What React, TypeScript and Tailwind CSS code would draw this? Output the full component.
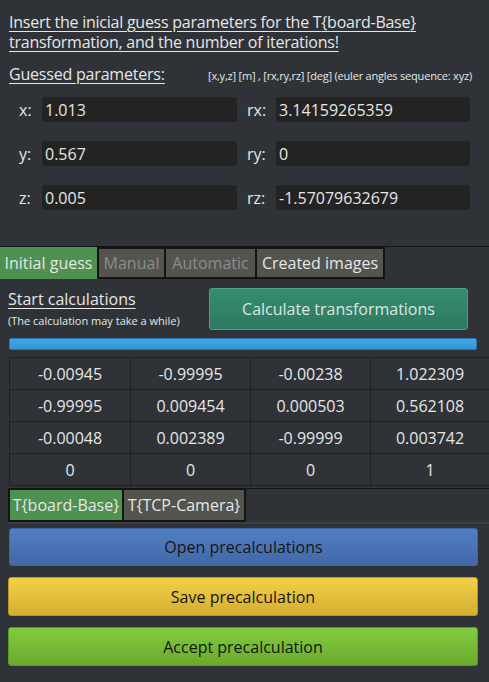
import React from 'react';

const font = { fontFamily: '"Open Sans", "Noto Sans", sans-serif' };

const params: [string, string, string, string][] = [
  ['x:', '1.013', 'rx:', '3.14159265359'],
  ['y:', '0.567', 'ry:', '0'],
  ['z:', '0.005', 'rz:', '-1.57079632679'],
];

const matrix = [
  ['-0.00945', '-0.99995', '-0.00238', '1.022309'],
  ['-0.99995', '0.009454', '0.000503', '0.562108'],
  ['-0.00048', '0.002389', '-0.99999', '0.003742'],
  ['0', '0', '0', '1'],
];

export default function App() {
  return (
    <div className="w-[489px] h-[682px] overflow-hidden bg-[#2f3337] text-[#e6e6e6] text-[16px] flex flex-col" style={font}>
      {/* guess parameters */}
      <div className="px-[9px] pt-[12px] h-[246px] flex flex-col">
        <p className="underline underline-offset-[3px] leading-[20px] tracking-[-0.25px]">
          Insert the inicial guess parameters for the T{'{'}board-Base{'}'}
          <br />
          transformation, and the number of iterations!
        </p>
        <div className="flex items-baseline mt-[10px] h-[22px]">
          <span className="underline underline-offset-[3px] w-[199px] tracking-[-0.2px]">Guessed parameters:</span>
          <span className="text-[11px] tracking-[-0.2px]">[x,y,z] [m] , [rx,ry,rz] [deg] (euler angles sequence: xyz)</span>
        </div>
        <div className="flex flex-col gap-[19px] mt-[13px]">
          {params.map(([l1, v1, l2, v2]) => (
            <div key={l1} className="flex items-center h-[25px] pl-[10px]">
              <span className="w-[23px]">{l1}</span>
              <div className="w-[195px] h-full bg-[#232323] rounded-[3px] flex items-center px-[3px]">{v1}</div>
              <span className="w-[29px] ml-[10px]">{l2}</span>
              <div className="w-[194px] h-full bg-[#232323] rounded-[3px] flex items-center px-[3px]">{v2}</div>
            </div>
          ))}
        </div>
      </div>

      {/* main tabs */}
      <div className="border-t border-[#141414] flex h-[33px]">
        <div className="w-[97px] bg-[#4e9150] flex items-center justify-center">Initial guess</div>
        <div className="w-[69px] bg-[#54544f] border-2 border-[#141414] flex items-center justify-center text-[#8c8c8c]">Manual</div>
        <div className="w-[91px] bg-[#54544f] border-2 border-l-0 border-[#141414] flex items-center justify-center text-[#8c8c8c]">Automatic</div>
        <div className="w-[128px] bg-[#54544f] border-2 border-l-0 border-[#141414] flex items-center justify-center">Created images</div>
      </div>

      <div className="flex flex-col pl-[8px]">
        <div className="flex mt-[9px] h-[42px]">
          <div className="w-[201px] flex flex-col pt-[1px]">
            <span className="underline underline-offset-[3px] leading-[20px]">Start calculations</span>
            <span className="text-[11px] mt-[5px] leading-[14px]">(The calculation may take a while)</span>
          </div>
          <button className="w-[259px] h-[42px] rounded-[3px] border border-[#47a283] bg-gradient-to-b from-[#368c6f] to-[#2d7a60] text-[#dfe6e2]">
            Calculate transformations
          </button>
        </div>
        <div className="mt-[8px] ml-[1px] w-[468px] h-[12px] rounded-[2px] border border-[#2a76ae] bg-gradient-to-b from-[#42a7e6] to-[#3595d6]" />

        {/* matrix */}
        <div className="mt-[7px] ml-[1px] border-l border-t border-[#1f2225] grid grid-cols-[121px_120px_120px_119px]">
          {matrix.flat().map((v, i) => (
            <div key={i} className="h-[32px] border-r border-b border-[#1f2225] flex items-center justify-center">{v}</div>
          ))}
        </div>

        {/* sub tabs */}
        <div className="flex h-[34px] mt-[2px]">
          <div className="w-[116px] bg-[#4e9150] border-2 border-[#141414] flex items-center justify-center">T{'{'}board-Base{'}'}</div>
          <div className="w-[122px] bg-[#54544f] border-2 border-l-0 border-[#141414] flex items-center justify-center">T{'{'}TCP-Camera{'}'}</div>
          <div className="flex-1 border-t border-[#141414]" />
        </div>
        <div className="border-t-2 border-[#3b3f42]" />

        {/* actions */}
        <div className="flex flex-col gap-[11px] mt-[4px] pr-[11px] text-[#151515]">
          <button className="ml-[1px] h-[38px] rounded-[3px] border border-[#3b64a3] bg-gradient-to-b from-[#527fc3] to-[#4268a8]">Open precalculations</button>
          <button className="h-[39px] rounded-[3px] border border-[#b8962a] bg-gradient-to-b from-[#f4d047] to-[#d5ad31]">Save precalculation</button>
          <button className="h-[39px] rounded-[3px] border border-[#5c9a26] bg-gradient-to-b from-[#82cc3c] to-[#6aa92e]">Accept precalculation</button>
        </div>
      </div>
    </div>
  );
}
